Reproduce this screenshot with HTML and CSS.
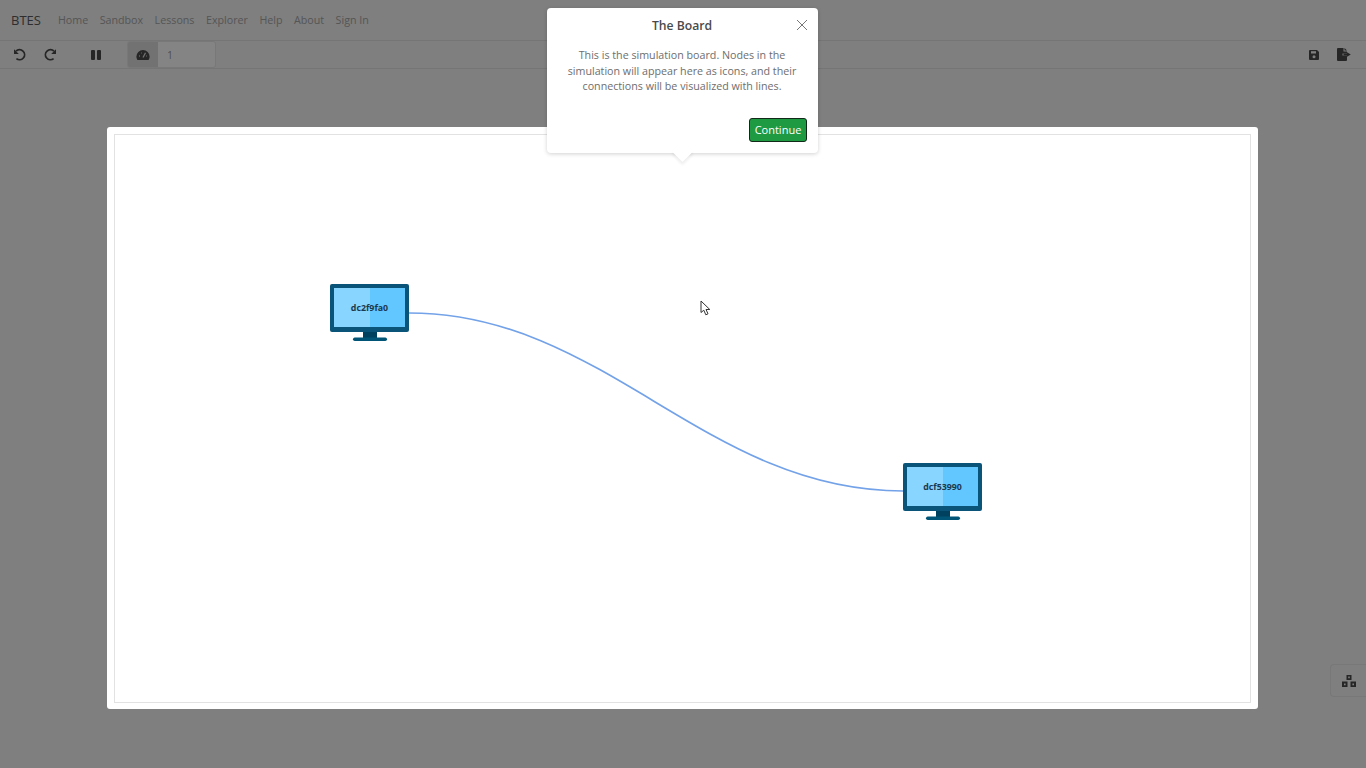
FILE: index.html
```html
<!DOCTYPE html>
<html lang="en">
<head>
    <meta charset="UTF-8">
    <title>BTES - Sandbox</title>
    <link rel="stylesheet" href="styles.css">
</head>
<body>

<header class="navbar">
    <span class="brand">BTES</span>
    <nav class="nav-links">
        <a href="#">Home</a>
        <a href="#">Sandbox</a>
        <a href="#">Lessons</a>
        <a href="#">Explorer</a>
        <a href="#">Help</a>
        <a href="#">About</a>
        <a href="#">Sign In</a>
    </nav>
</header>

<div class="toolbar">
    <button class="tool undo" aria-label="Undo">
        <svg width="14" height="14" viewBox="0 0 14 14"><path d="M3 3.2A5 5 0 1 1 3.4 10.6" class="stroke"/><path d="M1 1.2V6H5.8Z" class="fill"/></svg>
    </button>
    <button class="tool redo" aria-label="Redo">
        <svg width="14" height="14" viewBox="0 0 14 14"><path d="M11 3.2A5 5 0 1 0 10.6 10.6" class="stroke"/><path d="M13 1.2V6H8.2Z" class="fill"/></svg>
    </button>
    <button class="tool pause" aria-label="Pause">
        <svg width="12" height="12" viewBox="0 0 12 12"><rect x="1" y="1" width="4" height="10" rx="1" class="fill"/><rect x="7" y="1" width="4" height="10" rx="1" class="fill"/></svg>
    </button>
    <div class="speed">
        <span class="speed-icon">
            <svg width="14" height="12" viewBox="0 0 14 12"><path d="M7 1A6.6 6.6 0 0 0 .4 7.6C.4 9 .8 10 1.5 11H12.500C13.200 10 13.600 9 13.600 7.600A6.600 6.600 0 0 0 7 1Z" class="fill"/><path d="M7 8.500L9.500 3.800M3 7H3.800M10.400 7H11M5 4H5.500" class="cut"/></svg>
        </span>
        <span class="speed-value">1</span>
    </div>
    <div class="tool-right">
        <button class="tool save" aria-label="Save">
            <svg width="12" height="12" viewBox="0 0 12 12"><path d="M1.500 1H9L11 3V10A1 1 0 0 1 10 11H2A1 1 0 0 1 1 10V1.500Z" class="fill"/><rect x="3" y="2.200" width="5" height="2.300" fill="#7f7f7f"/><circle cx="6" cy="7.800" r="1.500" fill="#7f7f7f"/></svg>
        </button>
        <button class="tool export" aria-label="Export">
            <svg width="15" height="13" viewBox="0 0 15 13"><path d="M1 0H6.500V3.500H10V5.500H5.500V7.500H10V12A1 1 0 0 1 9 13H1A1 1 0 0 1 0 12V1A1 1 0 0 1 1 0Z" class="fill"/><path d="M7.500 0L10 2.600H7.500Z" class="fill"/><path d="M10 4.200L13.800 6.500L10 8.800V7.400H6.500V5.600H10Z" class="fill"/></svg>
        </button>
    </div>
</div>

<main class="stage">
    <section class="board">
        <div class="board-inner">
            <svg class="link" width="1136" height="567" viewBox="0 0 1136 567">
                <path d="M294 178C490 178 590 356 788 356" fill="none" stroke="#73a2e8" stroke-width="1.700"/>
            </svg>
            <div class="node node-a">
                <svg width="80" height="58" viewBox="0 0 80 58">
                    <rect x="33" y="47" width="14" height="7" fill="#00415f"/>
                    <rect x="23" y="53.500" width="34" height="3.500" rx="1.700" fill="#005577"/>
                    <rect width="79" height="48" rx="2" fill="#0b5479"/>
                    <rect x="4" y="4" width="36" height="39" fill="#88d5ff"/>
                    <rect x="40" y="4" width="35" height="39" fill="#62c6ff"/>
                </svg>
                <span class="node-label">dc2f9fa0</span>
            </div>
            <div class="node node-b">
                <svg width="80" height="58" viewBox="0 0 80 58">
                    <rect x="33" y="47" width="14" height="7" fill="#00415f"/>
                    <rect x="23" y="53.500" width="34" height="3.500" rx="1.700" fill="#005577"/>
                    <rect width="79" height="48" rx="2" fill="#0b5479"/>
                    <rect x="4" y="4" width="36" height="39" fill="#88d5ff"/>
                    <rect x="40" y="4" width="35" height="39" fill="#62c6ff"/>
                </svg>
                <span class="node-label">dcf53990</span>
            </div>
            <svg class="cursor" width="12" height="16" viewBox="0 0 12 16">
                <path d="M1 1V12.500L3.800 10.200L5.800 14.800L8 13.800L6 9.500H9.800Z" fill="#fff" stroke="#333" stroke-width="1"/>
            </svg>
        </div>
    </section>
</main>

<div class="popover">
    <button class="popover-close" aria-label="Close">
        <svg width="12" height="12" viewBox="0 0 12 12"><path d="M1 1L11 11M11 1L1 11" fill="none" stroke="#777" stroke-width="1"/></svg>
    </button>
    <h3 class="popover-title">The Board</h3>
    <p class="popover-text">This is the simulation board. Nodes in the simulation will appear here as icons, and their connections will be visualized with lines.</p>
    <div class="popover-footer">
        <button class="btn-continue">Continue</button>
    </div>
</div>

<button class="side-tab" aria-label="Network">
    <svg width="14" height="12" viewBox="0 0 14 12"><path d="M4.500 0H9.500V5H4.500ZM0 6.500H5.500V12H0ZM8.500 6.500H14V12H8.500Z" class="fill"/><path d="M6.200 1.500H7.800V3.200H6.200ZM2 8.500H3.600V10.200H2ZM10.400 8.500H12V10.200H10.400Z" fill="#7f7f7f"/></svg>
</button>

</body>
</html>
```

FILE: styles.css
```css
html, body {
    height: 100%;
}
body {
    font-family: "Open Sans", Arial, sans-serif;
    margin: 0;
    padding: 0;
    background-color: #7f7f7f;
    overflow: hidden;
    display: flex;
    flex-direction: column;
}
button {
    background: none;
    border: none;
    padding: 0;
    font-family: inherit;
}
.fill {
    fill: #262626;
}
.stroke {
    fill: none;
    stroke: #262626;
    stroke-width: 1.8;
}
.cut {
    fill: none;
    stroke: #727272;
    stroke-width: 1.300;
}

/* top nav */
.navbar {
    height: 41px;
    box-sizing: border-box;
    display: flex;
    align-items: center;
    padding: 0 0 1px 11px;
    border-bottom: 1px solid #757575;
}
.brand {
    font-size: 13px;
    color: #2e2e2e;
    margin-right: 17px;
}
.nav-links {
    display: flex;
    gap: 11.500px;
}
.nav-links a {
    font-size: 10.700px;
    color: #555;
    text-decoration: none;
}

/* toolbar */
.toolbar {
    height: 28px;
    box-sizing: border-box;
    display: flex;
    align-items: center;
    border-bottom: 1px solid #757575;
}
.tool {
    display: flex;
    align-items: center;
}
.undo {
    margin-left: 13px;
}
.redo {
    margin-left: 16px;
}
.pause {
    margin-left: 33px;
}
.speed {
    display: flex;
    margin-left: 25px;
    height: 27px;
    width: 89px;
    border-radius: 3px;
    overflow: hidden;
    border: 1px solid #787878;
    box-sizing: border-box;
}
.speed-icon {
    width: 30px;
    background-color: #727272;
    display: flex;
    align-items: center;
    justify-content: center;
}
.speed-value {
    flex: 1;
    background-color: #848484;
    font-size: 10.500px;
    color: #4f4f4f;
    line-height: 26px;
    padding-left: 9px;
}
.tool-right {
    margin-left: auto;
    display: flex;
    align-items: center;
    gap: 17px;
    padding-right: 14px;
}

/* board */
.stage {
    flex: 1;
    padding: 58px 0 0 107px;
}
.board {
    width: 1151px;
    height: 582px;
    box-sizing: border-box;
    background-color: #fff;
    border-radius: 3px;
    padding: 7px 7px 6px;
}
.board-inner {
    position: relative;
    height: 100%;
    box-sizing: border-box;
    border: 1px solid #e2e2e2;
}
.link {
    position: absolute;
    left: 0;
    top: 0;
}
.node {
    position: absolute;
    width: 80px;
    height: 58px;
}
.node svg {
    display: block;
}
.node-a {
    left: 215px;
    top: 149px;
}
.node-b {
    left: 788px;
    top: 328px;
}
.node-label {
    position: absolute;
    left: 0;
    top: 4px;
    width: 79px;
    height: 40px;
    line-height: 40px;
    text-align: center;
    font-size: 8.800px;
    font-weight: 700;
    color: #1c3a4d;
}
.cursor {
    position: absolute;
    left: 585px;
    top: 165px;
}

/* tour popover */
.popover {
    position: absolute;
    left: 547px;
    top: 8px;
    width: 271px;
    height: 145px;
    box-sizing: border-box;
    background-color: #fff;
    border-radius: 4px;
    box-shadow: 0 1px 4px rgba(0, 0, 0, 0.18);
    padding: 0 11px 11px 10px;
    display: flex;
    flex-direction: column;
}
.popover::after {
    content: "";
    position: absolute;
    left: 128px;
    bottom: -6px;
    width: 15px;
    height: 15px;
    background-color: #fff;
    transform: rotate(45deg);
    box-shadow: 2px 2px 3px rgba(0, 0, 0, 0.07);
}
.popover-title {
    margin: 9px 0 0;
    font-size: 12.200px;
    line-height: 17px;
    font-weight: 600;
    color: #4a4a4a;
    text-align: center;
}
.popover-close {
    position: absolute;
    right: 10px;
    top: 11px;
    display: flex;
}
.popover-text {
    margin: 14px 0 0;
    font-size: 10.700px;
    line-height: 15.600px;
    color: #6e6e6e;
    text-align: center;
}
.popover-footer {
    margin-top: auto;
    display: flex;
    justify-content: flex-end;
    position: relative;
    z-index: 1;
}
.btn-continue {
    width: 58px;
    height: 24px;
    box-sizing: border-box;
    background-color: #1e9a43;
    border: 1px solid #12291a;
    border-radius: 3px;
    color: #fff;
    font-size: 11px;
    padding-bottom: 2px;
}

/* side tab */
.side-tab {
    position: absolute;
    right: 0;
    top: 664px;
    width: 36px;
    height: 33px;
    box-sizing: border-box;
    border: 1px solid #787878;
    border-right: none;
    border-radius: 4px 0 0 4px;
    display: flex;
    align-items: center;
    justify-content: center;
}
```
